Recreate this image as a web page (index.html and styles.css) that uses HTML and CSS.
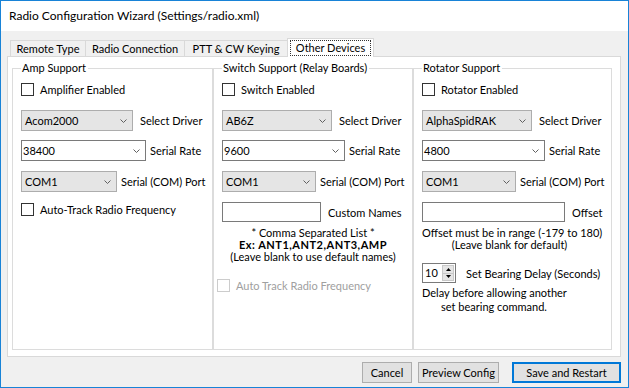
FILE: index.html
```html
<!DOCTYPE html>
<html lang="en">
<head>
    <meta charset="UTF-8">
    <meta name="viewport" content="width=device-width, initial-scale=1.0">
    <title>Radio Configuration Wizard</title>
    <link rel="stylesheet" href="styles.css">
</head>
<body>
    <div class="window">
        <div class="titlebar">Radio Configuration Wizard (Settings/radio.xml)</div>
        <div class="client">
            <div class="tabs">
                <div class="tab tab-remote">Remote Type</div>
                <div class="tab tab-radio">Radio Connection</div>
                <div class="tab tab-ptt">PTT &amp; CW Keying</div>
                <div class="tab tab-other active"><span class="focus">Other Devices</span></div>
            </div>

            <div class="tabpage">
                <!-- amplifier -->
                <fieldset class="group">
                    <legend>Amp Support</legend>
                    <div class="check enable"><span class="box"></span>Amplifier Enabled</div>
                    <div class="row driver-row">
                        <div class="combo w-driver amp">Acom2000<span class="arrow"><svg width="7" height="4" viewBox="0 0 7 4"><path d="M0.5 0.5 L3.5 3.5 L6.5 0.5" fill="none" stroke="#606060"/></svg></span></div>
                        <span class="lbl wide">Select Driver</span>
                    </div>
                    <div class="row rate-row">
                        <div class="combo edit w-rate amp">38400<span class="arrow"><svg width="7" height="4" viewBox="0 0 7 4"><path d="M0.5 0.5 L3.5 3.5 L6.5 0.5" fill="none" stroke="#606060"/></svg></span></div>
                        <span class="lbl">Serial Rate</span>
                    </div>
                    <div class="row port-row">
                        <div class="combo w-port amp">COM1<span class="arrow"><svg width="7" height="4" viewBox="0 0 7 4"><path d="M0.5 0.5 L3.5 3.5 L6.5 0.5" fill="none" stroke="#606060"/></svg></span></div>
                        <span class="lbl">Serial (COM) Port</span>
                    </div>
                    <div class="check track"><span class="box"></span>Auto-Track Radio Frequency</div>
                </fieldset>

                <!-- switch -->
                <fieldset class="group">
                    <legend>Switch Support (Relay Boards)</legend>
                    <div class="check enable"><span class="box"></span>Switch Enabled</div>
                    <div class="row driver-row">
                        <div class="combo w-driver">AB6Z<span class="arrow"><svg width="7" height="4" viewBox="0 0 7 4"><path d="M0.5 0.5 L3.5 3.5 L6.5 0.5" fill="none" stroke="#606060"/></svg></span></div>
                        <span class="lbl wide">Select Driver</span>
                    </div>
                    <div class="row rate-row">
                        <div class="combo edit w-rate">9600<span class="arrow"><svg width="7" height="4" viewBox="0 0 7 4"><path d="M0.5 0.5 L3.5 3.5 L6.5 0.5" fill="none" stroke="#606060"/></svg></span></div>
                        <span class="lbl">Serial Rate</span>
                    </div>
                    <div class="row port-row">
                        <div class="combo w-port">COM1<span class="arrow"><svg width="7" height="4" viewBox="0 0 7 4"><path d="M0.5 0.5 L3.5 3.5 L6.5 0.5" fill="none" stroke="#606060"/></svg></span></div>
                        <span class="lbl">Serial (COM) Port</span>
                    </div>
                    <div class="row field-row">
                        <div class="field w-names"></div>
                        <span class="lbl wide">Custom Names</span>
                    </div>
                    <div class="note">
                        * Comma Separated List *<br>
                        <b>Ex: ANT1,ANT2,ANT3,AMP</b><br>
                        (Leave blank to use default names)
                    </div>
                    <div class="check disabled"><span class="box"></span>Auto Track Radio Frequency</div>
                </fieldset>

                <!-- rotator -->
                <fieldset class="group">
                    <legend>Rotator Support</legend>
                    <div class="check enable"><span class="box"></span>Rotator Enabled</div>
                    <div class="row driver-row">
                        <div class="combo w-driver">AlphaSpidRAK<span class="arrow"><svg width="7" height="4" viewBox="0 0 7 4"><path d="M0.5 0.5 L3.5 3.5 L6.5 0.5" fill="none" stroke="#606060"/></svg></span></div>
                        <span class="lbl wide">Select Driver</span>
                    </div>
                    <div class="row rate-row">
                        <div class="combo edit w-rate">4800<span class="arrow"><svg width="7" height="4" viewBox="0 0 7 4"><path d="M0.5 0.5 L3.5 3.5 L6.5 0.5" fill="none" stroke="#606060"/></svg></span></div>
                        <span class="lbl">Serial Rate</span>
                    </div>
                    <div class="row port-row">
                        <div class="combo w-port">COM1<span class="arrow"><svg width="7" height="4" viewBox="0 0 7 4"><path d="M0.5 0.5 L3.5 3.5 L6.5 0.5" fill="none" stroke="#606060"/></svg></span></div>
                        <span class="lbl">Serial (COM) Port</span>
                    </div>
                    <div class="row field-row">
                        <div class="field w-offset"></div>
                        <span class="lbl wide">Offset</span>
                    </div>
                    <div class="note offset-note">
                        Offset must be in range (-179 to 180)<br>
                        (Leave blank for default)
                    </div>
                    <div class="row spin-row">
                        <div class="spin">
                            <span class="spin-value">10</span>
                            <span class="spin-btns">
                                <span class="spin-btn"><svg width="5" height="3" viewBox="0 0 5 3"><path d="M0 3 L2.5 0 L5 3 Z" fill="#000"/></svg></span>
                                <span class="spin-btn"><svg width="5" height="3" viewBox="0 0 5 3"><path d="M0 0 L2.5 3 L5 0 Z" fill="#000"/></svg></span>
                            </span>
                        </div>
                        <span class="lbl spin-lbl">Set Bearing Delay (Seconds)</span>
                    </div>
                    <div class="delay-note">
                        Delay before allowing another<br>
                        set bearing command.
                    </div>
                </fieldset>
            </div>

            <div class="buttons">
                <button class="btn btn-cancel">Cancel</button>
                <button class="btn btn-preview">Preview Config</button>
                <button class="btn btn-save">Save and Restart</button>
            </div>
        </div>
    </div>
</body>
</html>
```

FILE: styles.css
```css
body {
    margin: 0;
    font-family: Lato, "Liberation Sans", sans-serif;
    font-size: 12px;
    color: #000;
    background: #fff;
}
.window {
    width: 629px;
    height: 388px;
    box-sizing: border-box;
    border: 1px solid #1883d7;
    background: #f0f0f0;
    display: flex;
    flex-direction: column;
}
.titlebar {
    flex: none;
    height: 30px;
    line-height: 30px;
    padding-left: 8px;
    background: #fff;
}
.client {
    flex: 1;
    padding: 0 7px 0 6px;
    display: flex;
    flex-direction: column;
    font-size: 11px;
    white-space: nowrap;
}

/* tabs */
.tabs {
    display: flex;
    align-items: flex-end;
    height: 18px;
    margin-top: 7px;
    padding-left: 3px;
}
.tab {
    height: 16px;
    box-sizing: border-box;
    border: 1px solid #d9d9d9;
    border-bottom: none;
    margin-left: -1px;
    background: #f0f0f0;
    text-align: center;
    line-height: 15px;
}
.tab:first-child {
    margin-left: 0;
}
.tab-remote { width: 76px; }
.tab-radio { width: 100px; }
.tab-ptt { width: 104px; }
.tab-other { width: 87px; }
.tab.active {
    height: 19px;
    margin-bottom: -1px;
    padding: 1px 2px 0;
    background: #fff;
    position: relative;
    z-index: 1;
}
.tab .focus {
    display: block;
    height: 16px;
    box-sizing: border-box;
    border: 1px dotted #333;
    line-height: 13px;
}

/* page */
.tabpage {
    height: 301px;
    box-sizing: border-box;
    border: 1px solid #d9d9d9;
    background: #fff;
    padding: 4px 8px 6px 4px;
    display: grid;
    grid-template-columns: 201px 200px 199px;
}
.group {
    margin: 0;
    padding: 0 8px;
    border: 1px solid #dcdcdc;
    min-width: 0;
}
.group legend {
    padding: 0 2px 0 1px;
    line-height: 14px;
}

.check {
    display: flex;
    align-items: center;
    height: 13px;
}
.box {
    flex: none;
    width: 13px;
    height: 13px;
    box-sizing: border-box;
    border: 1px solid #333;
    background: #fff;
    margin-right: 6px;
}
.enable { margin-top: 8px; }
.track { margin-top: 11px; }
.check.disabled {
    margin-top: 16px;
    margin-left: -5px;
    color: #a0a0a0;
}
.check.disabled .box {
    border-color: #ccc;
}

.row {
    display: flex;
    align-items: center;
}
.driver-row { margin-top: 14px; }
.rate-row { margin-top: 9px; }
.port-row { margin-top: 10px; }
.field-row { margin-top: 10px; }
.spin-row { margin-top: 12px; }

.combo {
    flex: none;
    height: 21px;
    box-sizing: border-box;
    border: 1px solid #adadad;
    background: #e5e5e5;
    padding-left: 3px;
    display: flex;
    align-items: center;
}
.combo.edit {
    background: #fff;
    border-color: #7a7a7a;
    padding-left: 1px;
}
.combo .arrow {
    margin-left: auto;
    width: 17px;
    display: flex;
    justify-content: center;
}
.w-driver { width: 110px; }
.w-rate { width: 123px; }
.w-port { width: 94px; }
.w-driver.amp { width: 112px; }
.w-rate.amp { width: 125px; }
.w-port.amp { width: 96px; }

.field {
    flex: none;
    height: 20px;
    box-sizing: border-box;
    border: 1px solid #7a7a7a;
    background: #fff;
}
.w-names { width: 99px; }
.w-offset { width: 143px; }

.lbl { margin-left: 4px; }
.lbl.wide { margin-left: 7px; }
.spin-lbl { margin-left: 10px; }

.note {
    margin-top: 5px;
    line-height: 12px;
    text-align: center;
}
.note b {
    letter-spacing: 0.5px;
}
.offset-note {
    width: 175px;
}
.delay-note {
    margin-top: 3px;
    width: 144px;
    line-height: 14px;
    text-align: center;
}

.spin {
    flex: none;
    width: 34px;
    height: 20px;
    box-sizing: border-box;
    border: 1px solid #7a7a7a;
    background: #fff;
    display: flex;
}
.spin-value {
    flex: 1;
    padding-left: 2px;
    line-height: 18px;
}
.spin-btns {
    width: 12px;
    margin: 1px;
    display: flex;
    flex-direction: column;
}
.spin-btn {
    flex: 1;
    background: #e5e5e5;
    border: 1px solid #c8c8c8;
    display: flex;
    align-items: center;
    justify-content: center;
}
.spin-btn + .spin-btn {
    border-top: none;
}

/* bottom buttons */
.buttons {
    display: flex;
    justify-content: flex-end;
    gap: 6px;
    padding-top: 5px;
}
.btn {
    height: 21px;
    padding: 0;
    font: inherit;
    color: #000;
    background: #e1e1e1;
    border: 1px solid #adadad;
    white-space: nowrap;
}
.btn-cancel { width: 50px; }
.btn-preview { width: 81px; }
.btn-save {
    width: 109px;
    margin-left: 7px;
    border-color: #0078d7;
    box-shadow: inset 0 0 0 1px #0078d7;
}
```
